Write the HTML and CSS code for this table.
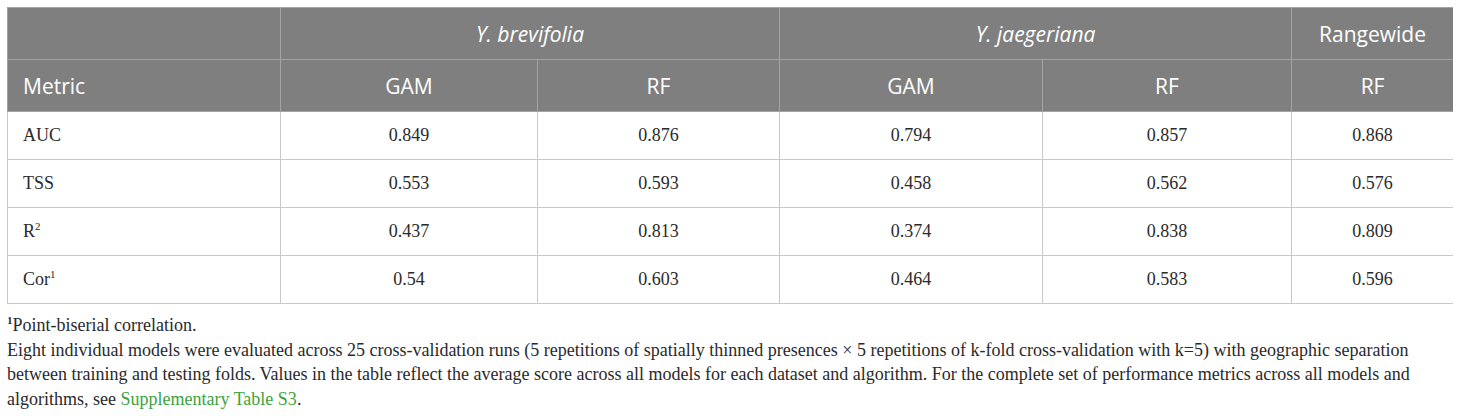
FILE: index.html
```html
<!DOCTYPE html>
<html lang="en">

<head>
    <meta charset="UTF-8">
    <title>Model performance metrics</title>
    <link rel="stylesheet" href="styles.css">
</head>

<body>
    <div class="table-wrap">
        <table class="metrics">
            <colgroup>
                <col class="c-metric">
                <col class="c-bgam">
                <col class="c-brf">
                <col class="c-jgam">
                <col class="c-jrf">
                <col class="c-range">
            </colgroup>
            <thead>
                <tr>
                    <th></th>
                    <th colspan="2"><i>Y. brevifolia</i></th>
                    <th colspan="2"><i>Y. jaegeriana</i></th>
                    <th>Rangewide</th>
                </tr>
                <tr>
                    <th class="left">Metric</th>
                    <th>GAM</th>
                    <th>RF</th>
                    <th>GAM</th>
                    <th>RF</th>
                    <th>RF</th>
                </tr>
            </thead>
            <tbody>
                <tr>
                    <td class="left">AUC</td>
                    <td>0.849</td>
                    <td>0.876</td>
                    <td>0.794</td>
                    <td>0.857</td>
                    <td>0.868</td>
                </tr>
                <tr>
                    <td class="left">TSS</td>
                    <td>0.553</td>
                    <td>0.593</td>
                    <td>0.458</td>
                    <td>0.562</td>
                    <td>0.576</td>
                </tr>
                <tr>
                    <td class="left">R<sup>2</sup></td>
                    <td>0.437</td>
                    <td>0.813</td>
                    <td>0.374</td>
                    <td>0.838</td>
                    <td>0.809</td>
                </tr>
                <tr>
                    <td class="left">Cor<sup>1</sup></td>
                    <td>0.54</td>
                    <td>0.603</td>
                    <td>0.464</td>
                    <td>0.583</td>
                    <td>0.596</td>
                </tr>
            </tbody>
        </table>
    </div>

    <div class="notes">
        <p><sup class="fn">1</sup>Point-biserial correlation.</p>
        <p>Eight individual models were evaluated across 25 cross-validation runs (5 repetitions of spatially thinned presences × 5 repetitions of k-fold cross-validation with k=5) with geographic separation between training and testing folds. Values in the table reflect the average score across all models for each dataset and algorithm. For the complete set of performance metrics across all models and algorithms, see <span class="supp">Supplementary Table S3</span>.</p>
    </div>
</body>

</html>
```

FILE: styles.css
```css
body {
    margin: 7px;
    background: white;
    color: #2a2a2a;
    font-family: 'Liberation Serif', 'Times New Roman', serif;
}

.table-wrap {
    width: 1446px;
}

.metrics {
    width: 100%;
    border-collapse: collapse;
    table-layout: fixed;
    border: 1px solid #c9c9c9;
}

.c-metric { width: 273px; }
.c-bgam { width: 257px; }
.c-brf { width: 242px; }
.c-jgam { width: 263px; }
.c-jrf { width: 249px; }
.c-range { width: 162px; }

.metrics th {
    background-color: #7f7f7f;
    color: white;
    font-family: 'Open Sans', 'Noto Sans', sans-serif;
    font-weight: normal;
    font-size: 21px;
    height: 52px;
    padding: 0 15px;
    text-align: center;
    border: 1px solid #a3a3a3;
    box-sizing: border-box;
}

.metrics td {
    font-size: 18px;
    height: 48px;
    padding: 0 15px;
    text-align: center;
    border: 1px solid #c9c9c9;
    box-sizing: border-box;
}

.metrics .left {
    text-align: left;
}

.metrics td sup {
    font-size: 11px;
    vertical-align: 7px;
    line-height: 0;
}

.notes {
    width: 1446px;
    margin-top: 9px;
    font-size: 18px;
    line-height: 24.5px;
}

.notes p {
    margin: 0;
}

.fn {
    font-weight: bold;
    font-size: 11px;
    vertical-align: 7px;
    line-height: 0;
}

.supp {
    color: #3da23d;
}
```
